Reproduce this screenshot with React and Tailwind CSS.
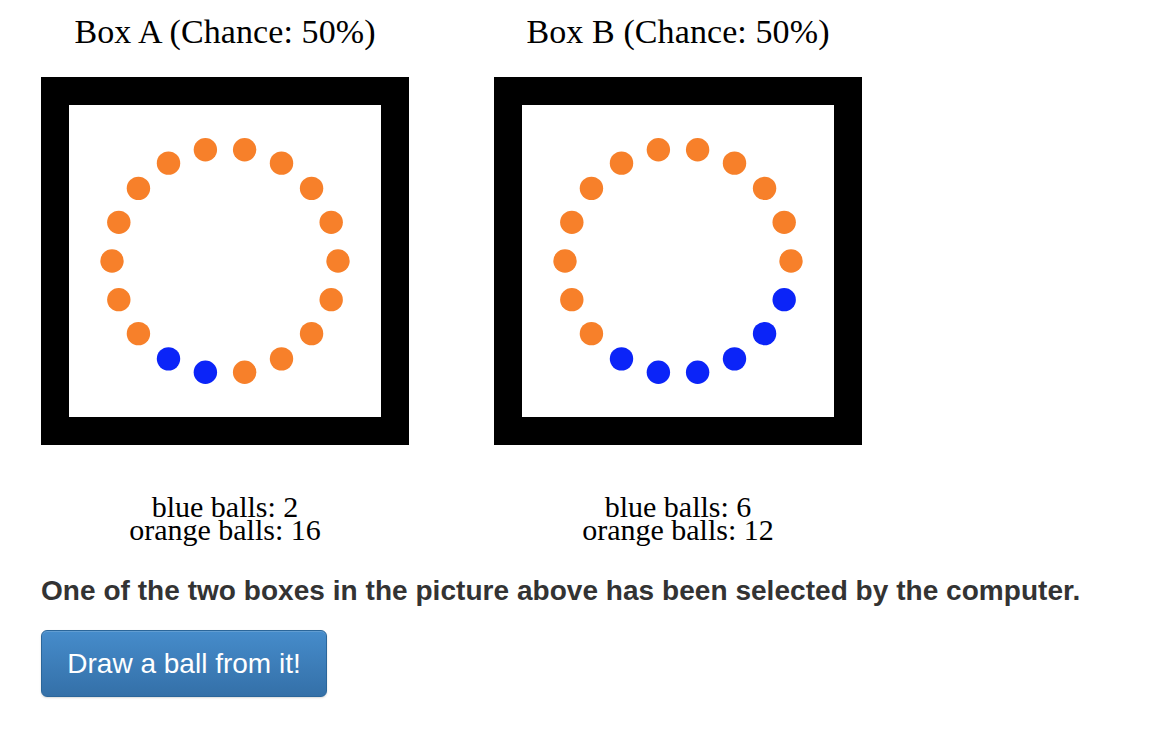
import React from "react";

const ORANGE = "#f7802a";
const BLUE = "#0b24f8";

function Balls({ blue }) {
  const cx = 156;
  const cy = 156;
  const R = 113;
  const balls = [];
  for (let k = 0; k < 18; k++) {
    const deg = k * 20;
    const a = (deg * Math.PI) / 180;
    const x = cx + R * Math.cos(a);
    const y = cy - R * Math.sin(a);
    balls.push(
      <circle
        key={k}
        cx={x}
        cy={y}
        r={11.7}
        fill={blue.includes(deg) ? BLUE : ORANGE}
      />
    );
  }
  return (
    <svg width="312" height="312" viewBox="0 0 312 312" className="block">
      {balls}
    </svg>
  );
}

function BoxColumn({ label, blue, nBlue, nOrange }) {
  return (
    <div className="flex w-[368px] flex-col items-center">
      <div className="pt-[12px] text-[34px] leading-[40px] tracking-[0.1px] text-black [font-family:'Liberation_Serif',serif]">
        Box {label} (Chance: 50%)
      </div>
      <div className="mt-[25px] border-[28px] border-black bg-white">
        <Balls blue={blue} />
      </div>
      <div className="mt-[50px] flex flex-col items-center text-[30px] leading-[23px] text-black [font-family:'Liberation_Serif',serif]">
        <div>blue balls: {nBlue}</div>
        <div>orange balls: {nOrange}</div>
      </div>
    </div>
  );
}

export default function App() {
  return (
    <div className="min-h-[746px] w-[1154px] bg-white pl-[41px]">
      <div className="flex gap-[85px]">
        <BoxColumn label="A" blue={[240, 260]} nBlue={2} nOrange={16} />
        <BoxColumn
          label="B"
          blue={[240, 260, 280, 300, 320, 340]}
          nBlue={6}
          nOrange={12}
        />
      </div>
      <p className="mt-[34px] whitespace-nowrap text-[28px] font-bold leading-[32px] tracking-[0.04px] text-[#333333] [font-family:'Liberation_Sans',sans-serif]">
        One of the two boxes in the picture above has been selected by the computer.
      </p>
      <button className="mt-[23px] flex h-[67px] w-[286px] items-center justify-center rounded-[6px] border border-[#2b669a] bg-gradient-to-b from-[#468ccb] to-[#3470a8] text-[28px] leading-[32px] text-white shadow-[inset_0_1px_0_rgba(255,255,255,0.15),0_1px_2px_rgba(0,0,0,0.15)] [font-family:'Liberation_Sans',sans-serif]">
        Draw a ball from it!
      </button>
    </div>
  );
}
